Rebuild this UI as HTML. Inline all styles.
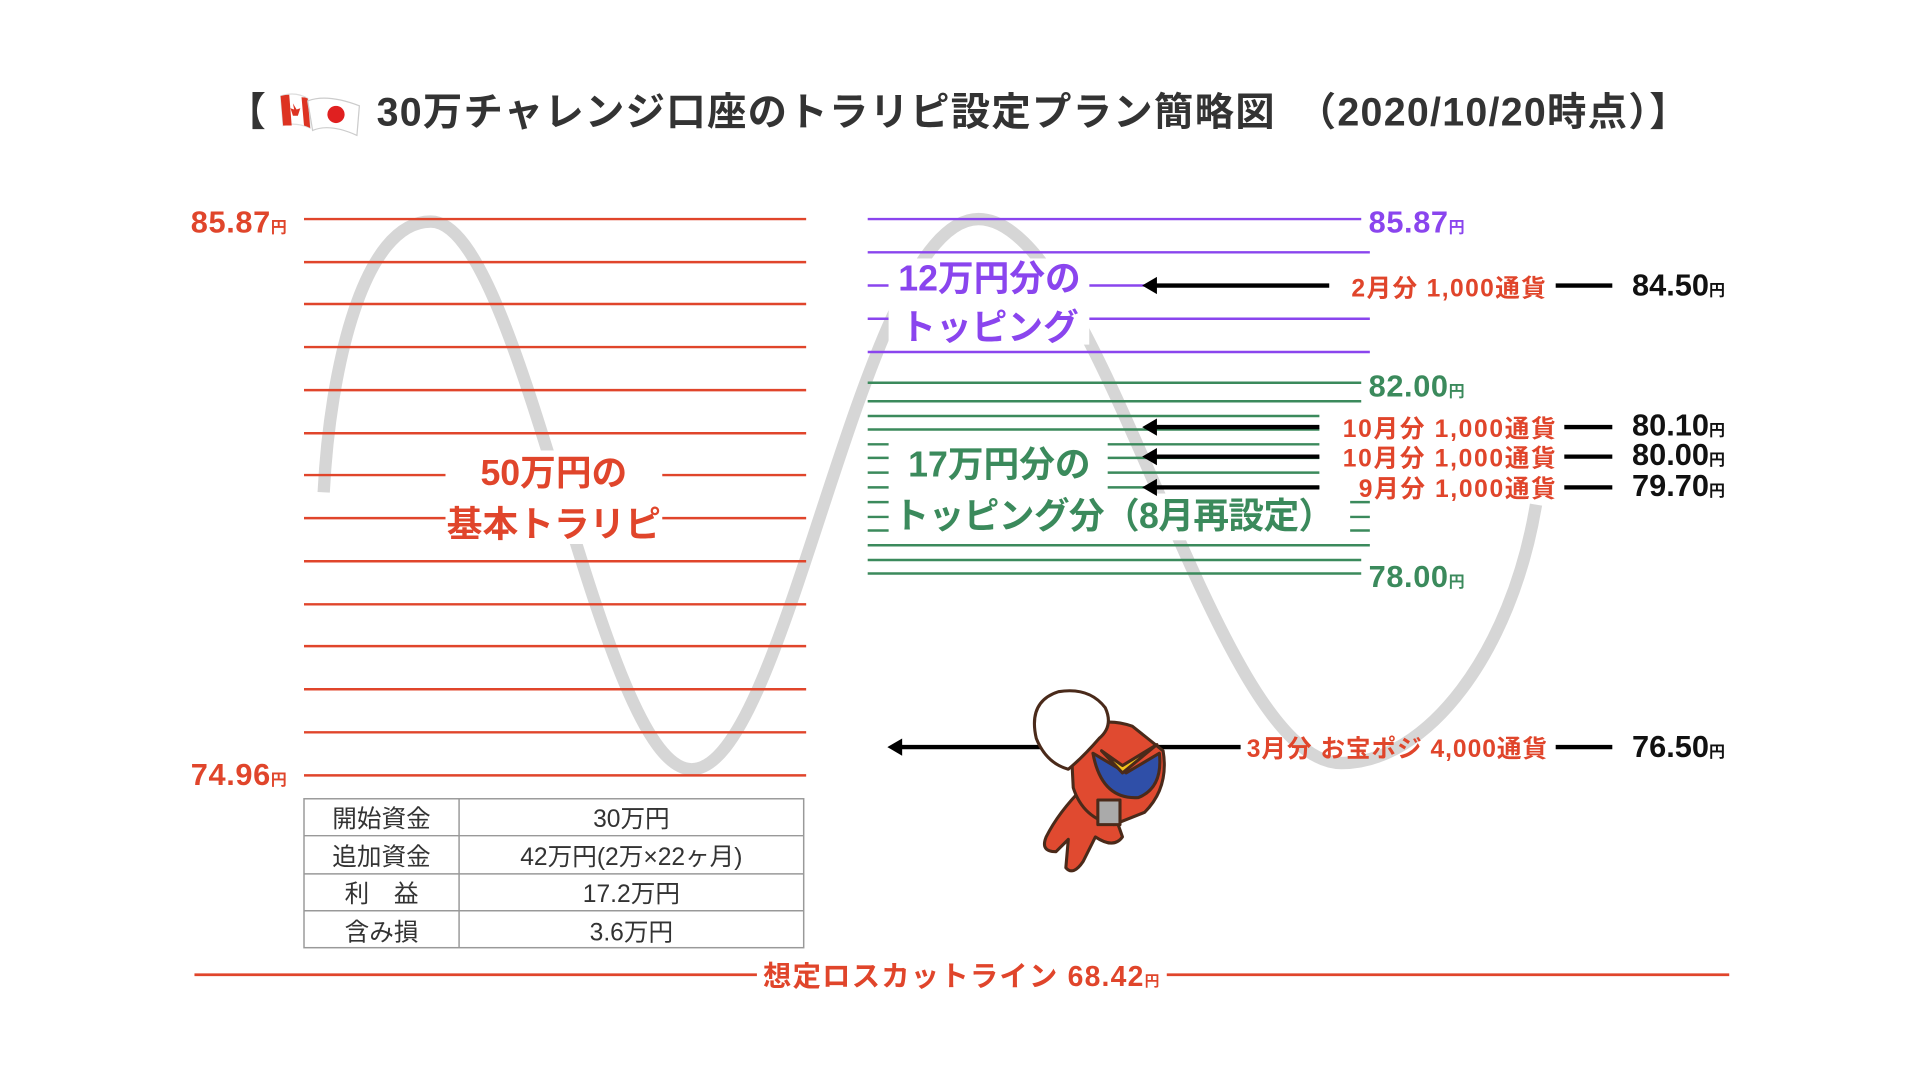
<!DOCTYPE html>
<html><head><meta charset="utf-8"><style>
html,body{margin:0;padding:0;background:#fff;}
svg{display:block}
text{font-family:"Liberation Sans","Noto Sans CJK JP",sans-serif;font-weight:bold}
.r{fill:#e0452b}.p{fill:#8a45ee}.g{fill:#3b8a5c}.k{fill:#111}
.n{font-weight:normal}
</style></head><body>
<svg width="1920" height="1080" viewBox="0 0 1560 877.5" xmlns="http://www.w3.org/2000/svg">
<rect width="1560" height="878" fill="#fff"/>
<!-- title -->
<text x="184" y="102" font-size="32" fill="#333">【</text>
<g transform="translate(226,74)">
<path d="M2,4 Q14,0 24,6 L26,30 Q14,25 4,28 Z" fill="#fff" stroke="#ddd"/>
<path d="M2,4 Q6,3 9,3 L11,28 Q7,28 4,28Z" fill="#d32"/>
<path d="M19,5 Q22,5 24,6 L26,30 Q24,29 21,28Z" fill="#d32"/>
<path d="M12,10 l3,5 3,-1 -2,6 -4,0 -2,-6 3,1z" fill="#d32"/>
<path d="M24,8 Q40,2 66,12 L64,36 Q42,26 28,32 Z" fill="#fff" stroke="#ccc"/>
<circle cx="47" cy="19" r="7" fill="#e02020"/>
</g>
<text x="306" y="102" font-size="32" fill="#333" textLength="1066">30万チャレンジ口座のトラリピ設定プラン簡略図　（2020/10/20時点）】</text>

<!-- curve -->
<path d="M263,400 C268,300 295,180 350,180 C425,180 487,625 562,625 C640,625 700,178 795,178 C895,178 985,620 1090,620 C1160,620 1228,530 1248,410" fill="none" stroke="#d6d6d6" stroke-width="10"/>

<!-- red lines -->
<g stroke="#e0452b" stroke-width="2">
<line x1="247" y1="178" x2="655" y2="178"/>
<line x1="247" y1="213" x2="655" y2="213"/>
<line x1="247" y1="247" x2="655" y2="247"/>
<line x1="247" y1="282" x2="655" y2="282"/>
<line x1="247" y1="317" x2="655" y2="317"/>
<line x1="247" y1="352" x2="655" y2="352"/>
<line x1="247" y1="386" x2="362" y2="386"/><line x1="538" y1="386" x2="655" y2="386"/>
<line x1="247" y1="421" x2="362" y2="421"/><line x1="538" y1="421" x2="655" y2="421"/>
<line x1="247" y1="456" x2="655" y2="456"/>
<line x1="247" y1="491" x2="655" y2="491"/>
<line x1="247" y1="525" x2="655" y2="525"/>
<line x1="247" y1="560" x2="655" y2="560"/>
<line x1="247" y1="595" x2="655" y2="595"/>
<line x1="247" y1="630" x2="655" y2="630"/>
</g>
<rect x="362" y="366" width="176" height="76" fill="#fff"/>
<text x="450" y="394" font-size="29" class="r" text-anchor="middle">50万円の</text>
<text x="450" y="436" font-size="29" class="r" text-anchor="middle">基本トラリピ</text>
<text x="155" y="189" font-size="25" class="r" letter-spacing="0.5">85.87<tspan font-size="13">円</tspan></text>
<text x="155" y="638" font-size="25" class="r" letter-spacing="0.5">74.96<tspan font-size="13">円</tspan></text>

<!-- purple -->
<g stroke="#8a45ee" stroke-width="2">
<line x1="705" y1="178" x2="1106" y2="178"/>
<line x1="705" y1="205" x2="1113" y2="205"/>
<line x1="705" y1="232" x2="722" y2="232"/><line x1="885" y1="232" x2="930" y2="232"/>
<line x1="705" y1="259" x2="722" y2="259"/><line x1="885" y1="259" x2="1113" y2="259"/>
<line x1="705" y1="286" x2="1113" y2="286"/>
</g>
<rect x="722" y="210" width="163" height="70" fill="#fff"/>
<text x="804" y="236" font-size="29" class="p" text-anchor="middle">12万円分の</text>
<text x="804" y="276" font-size="29" class="p" text-anchor="middle">トッピング</text>
<text x="1112" y="189" font-size="25" class="p" letter-spacing="0.5">85.87<tspan font-size="13">円</tspan></text>

<!-- green -->
<g stroke="#3b8a5c" stroke-width="2">
<line x1="705" y1="311" x2="1106" y2="311"/>
<line x1="705" y1="326" x2="1106" y2="326"/>
<line x1="705" y1="338" x2="1072" y2="338"/>
<line x1="705" y1="349" x2="1072" y2="349"/>
<line x1="705" y1="361" x2="1072" y2="361"/>
<line x1="705" y1="372" x2="1072" y2="372"/>
<line x1="705" y1="384" x2="1072" y2="384"/>
<line x1="705" y1="396" x2="1072" y2="396"/>
<line x1="705" y1="408" x2="1113" y2="408"/>
<line x1="705" y1="420" x2="1113" y2="420"/>
<line x1="705" y1="431" x2="1113" y2="431"/>
<line x1="705" y1="443" x2="1113" y2="443"/>
<line x1="705" y1="455" x2="1106" y2="455"/>
<line x1="705" y1="466" x2="1106" y2="466"/>
</g>
<rect x="722" y="355" width="178" height="46" fill="#fff"/>
<rect x="722" y="401" width="375" height="38" fill="#fff"/>
<text x="812" y="387" font-size="29" class="g" text-anchor="middle">17万円分の</text>
<text x="726" y="429" font-size="29" class="g" letter-spacing="-0.5">トッピング分（8月再設定）</text>
<text x="1112" y="322" font-size="25" class="g" letter-spacing="0.5">82.00<tspan font-size="13">円</tspan></text>
<text x="1112" y="477" font-size="25" class="g" letter-spacing="0.5">78.00<tspan font-size="13">円</tspan></text>

<!-- arrows -->
<g stroke="#000" stroke-width="3.5">
<line x1="936" y1="232" x2="1080" y2="232"/>
<line x1="936" y1="347" x2="1072" y2="347"/>
<line x1="936" y1="371" x2="1072" y2="371"/>
<line x1="936" y1="396" x2="1072" y2="396"/>
<line x1="730" y1="607" x2="1008" y2="607"/>
<line x1="1264" y1="232" x2="1310" y2="232"/>
<line x1="1271" y1="347" x2="1310" y2="347"/>
<line x1="1271" y1="371" x2="1310" y2="371"/>
<line x1="1271" y1="396" x2="1310" y2="396"/>
<line x1="1264" y1="607" x2="1310" y2="607"/>
</g>
<g fill="#000">
<path d="M928,232 l12,-7 0,14z"/><path d="M928,347 l12,-7 0,14z"/>
<path d="M928,371 l12,-7 0,14z"/><path d="M928,396 l12,-7 0,14z"/>
<path d="M721,607 l12,-7 0,14z"/>
</g>
<g font-size="20" class="r">
<text x="1098" y="241" textLength="158">2月分 1,000通貨</text>
<text x="1091" y="355" textLength="173">10月分 1,000通貨</text>
<text x="1091" y="379" textLength="173">10月分 1,000通貨</text>
<text x="1104" y="404" textLength="160">9月分 1,000通貨</text>
<text x="1013" y="615" textLength="244">3月分 お宝ポジ 4,000通貨</text>
</g>
<g font-size="25" class="k">
<text x="1326" y="240">84.50<tspan font-size="13">円</tspan></text>
<text x="1326" y="354">80.10<tspan font-size="13">円</tspan></text>
<text x="1326" y="378">80.00<tspan font-size="13">円</tspan></text>
<text x="1326" y="403">79.70<tspan font-size="13">円</tspan></text>
<text x="1326" y="615">76.50<tspan font-size="13">円</tspan></text>
</g>

<!-- character -->
<g stroke="#4a2a1a" stroke-width="2.5" stroke-linejoin="round">
<path d="M880,640 Q860,660 850,680 Q845,692 858,692 L868,682 L866,705 Q872,712 880,700 L890,680 Q905,690 912,680 L905,660 Z" fill="#e04a30"/>
<path d="M870,600 Q890,580 920,590 L945,610 Q950,640 930,660 L905,670 Q880,665 872,640 Z" fill="#e04a30"/>
<path d="M888,612 L915,628 L942,612 Q945,640 925,648 Q895,650 888,612Z" fill="#2f4fa8"/>
<path d="M895,610 L912,628 L940,605 L912,622Z" fill="#f2c21b"/>
<rect x="892" y="650" width="18" height="20" fill="#aaa"/>
<path d="M842,600 Q835,570 860,562 Q885,558 898,575 Q905,590 893,600 Q880,615 868,625 Q850,620 842,600Z" fill="#fff"/>
</g>

<!-- table -->
<g stroke="#999" stroke-width="1.2" fill="none">
<rect x="247" y="649" width="406" height="121"/>
<line x1="373" y1="649" x2="373" y2="770"/>
<line x1="247" y1="679" x2="653" y2="679"/>
<line x1="247" y1="710" x2="653" y2="710"/>
<line x1="247" y1="740" x2="653" y2="740"/>
</g>
<g font-size="20" fill="#333" text-anchor="middle">
<text class="n" x="310" y="672">開始資金</text>
<text class="n" x="513" y="672">30万円</text>
<text class="n" x="310" y="703">追加資金</text>
<text class="n" x="513" y="703">42万円(2万×22ヶ月)</text>
<text class="n" x="310" y="733">利　益</text>
<text class="n" x="513" y="733">17.2万円</text>
<text class="n" x="310" y="764">含み損</text>
<text class="n" x="513" y="764">3.6万円</text>
</g>

<!-- losscut -->
<g stroke="#e0452b" stroke-width="2.2">
<line x1="158" y1="792" x2="615" y2="792"/>
<line x1="948" y1="792" x2="1405" y2="792"/>
</g>
<text x="620" y="801" font-size="23" class="r" textLength="322">想定ロスカットライン 68.42<tspan font-size="12">円</tspan></text>
</svg>
</body></html>
